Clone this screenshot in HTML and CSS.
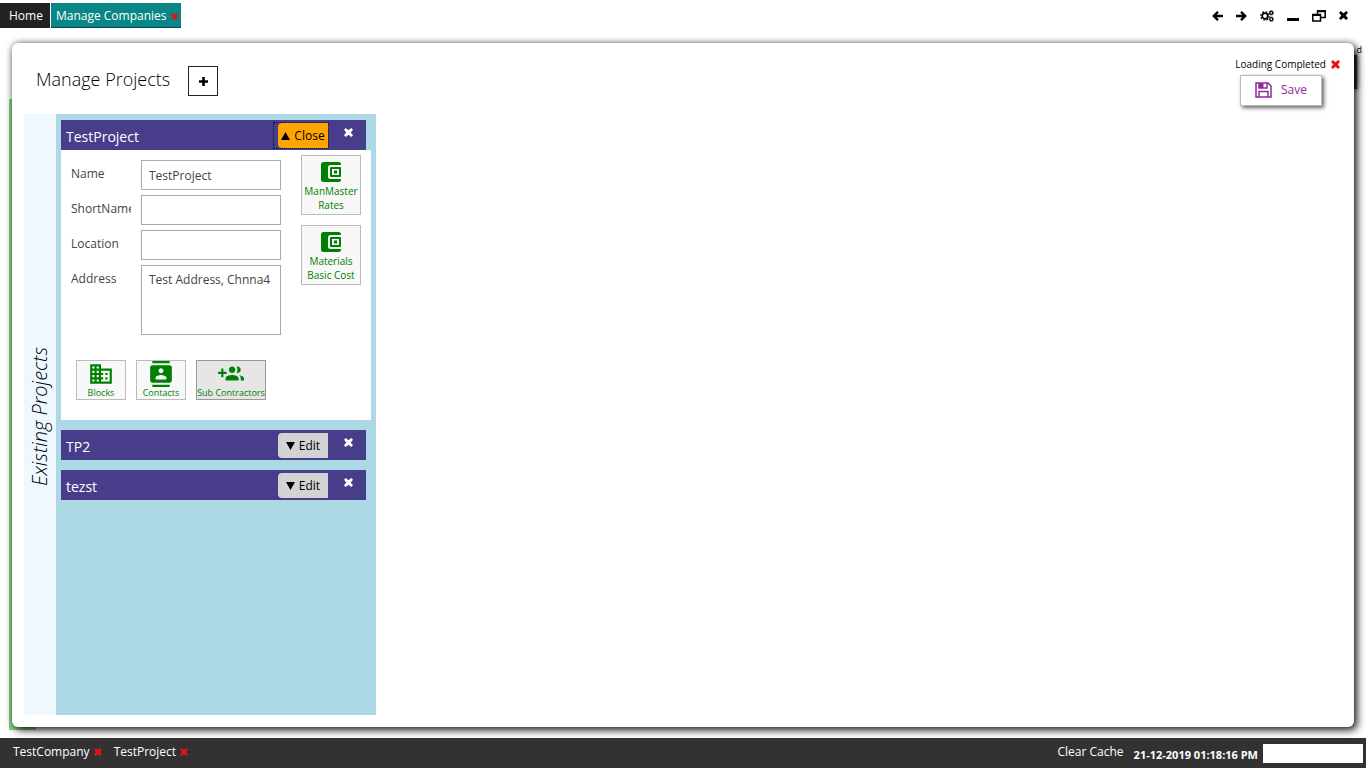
FILE: index.html
```html
<!DOCTYPE html>
<html lang="en">
<head>
<meta charset="utf-8">
<title>Manage Companies</title>
<link rel="stylesheet" href="styles.css">
</head>
<body>
<svg class="defs" aria-hidden="true">
  <symbol id="x" viewBox="0 0 10 10"><path d="M2 0 5 2.500 8 0 10 2 7.500 5 10 8 8 10 5 7.500 2 10 0 8 2.500 5 0 2z"/></symbol>
  <symbol id="wallet" viewBox="0 0 20 20"><path fill-rule="evenodd" d="M2.500 0h15A2.500 2.500 0 0 1 20 2.500V3H9.500a2.500 2.500 0 0 0-2.500 2.500v9A2.500 2.500 0 0 0 9.500 17H20v.5a2.500 2.500 0 0 1-2.500 2.500h-15A2.500 2.500 0 0 1 0 17.500v-15A2.500 2.500 0 0 1 2.500 0zM10 5h9a1 1 0 0 1 1 1v8a1 1 0 0 1-1 1h-9a1 1 0 0 1-1-1V6a1 1 0 0 1 1-1zM11 7v6h7V7zM13 8.500h3v3h-3z"/></symbol>
</svg>
<header class="topbar">
  <nav class="tabs">
    <button class="tab">Home</button>
    <div class="tab tab-active"><a href="#">Manage Companies</a><button class="icon-btn red" aria-label="Close tab"><svg width="7" height="7"><use href="#x"/></svg></button></div>
  </nav>
  <div class="window-tools">
    <button class="icon-btn" aria-label="Back"><svg width="11" height="10" viewBox="0 0 11 10" class="line"><path d="M11 5H1.500M6 .8 1.800 5 6 9.200"/></svg></button>
    <button class="icon-btn" aria-label="Forward"><svg width="11" height="10" viewBox="0 0 11 10" class="line"><path d="M0 5h9.500M5 .8 9.200 5 5 9.200"/></svg></button>
    <button class="icon-btn" aria-label="Settings"><svg width="14" height="12" viewBox="0 0 14 12"><g fill="none" stroke="#000"><circle cx="5" cy="6" r="2.800" stroke-width="1.700"/><circle cx="5" cy="6" r="4.200" stroke-width="1.200" stroke-dasharray="1.700 1.600"/><circle cx="11.300" cy="2.800" r="1.500" stroke-width="1.300"/><circle cx="11.300" cy="9.200" r="1.500" stroke-width="1.300"/><circle cx="11.300" cy="2.800" r="2.300" stroke-width=".8" stroke-dasharray="1 .8"/><circle cx="11.300" cy="9.200" r="2.300" stroke-width=".8" stroke-dasharray="1 .8"/></g></svg></button>
    <button class="icon-btn" aria-label="Minimize"><svg width="12" height="12" viewBox="0 0 12 12"><path d="M0 8h12v3H0z"/></svg></button>
    <button class="icon-btn" aria-label="Restore"><svg width="14" height="12" viewBox="0 0 14 12"><path fill="none" stroke="#000" stroke-width="1.500" d="M5.500 4V1h7.700v6.500H9M.8 4.500h7.700V11H.8z"/><path d="M5 .3h9v2H5zM0 4h9v2H0z"/></svg></button>
    <button class="icon-btn" aria-label="Close"><svg width="9" height="9"><use href="#x"/></svg></button>
  </div>
</header>
<main class="stage">
  <div class="back-panel"></div>
  <div class="back-shade"></div>
  <section class="dialog">
    <div class="dialog-head">
      <h1>Manage Projects</h1>
      <button class="add" aria-label="Add project"><svg width="9" height="9" viewBox="0 0 9 9"><path d="M3.200 0h2.600v3.200H9v2.600H5.800V9H3.200V5.800H0V3.200h3.200z"/></svg></button>
      <div class="actions">
        <div class="status"><span>Loading Completed</span><button class="icon-btn red" aria-label="Dismiss"><svg width="9" height="9"><use href="#x"/></svg></button></div>
        <button class="save"><svg width="17" height="16" viewBox="0 0 17 16"><path fill="none" stroke="#8e2a9b" stroke-width="1.500" d="M1 1h12l3 3v11H1zM4 1v5h8V1M4 15V9.500h9V15"/><path fill="#8e2a9b" d="M4 1h4.500v5H4z"/></svg>Save</button>
      </div>
    </div>
    <div class="projects">
      <h2 class="side-title">Existing Projects</h2>
      <div class="project-list">
        <article>
          <div class="bar"><h3>TestProject</h3><div class="focus"><button class="toggle toggle-open"><svg width="9" height="8" viewBox="0 0 9 8"><path d="M4.500 0 9 8H0z"/></svg>Close</button></div><button class="icon-btn white" aria-label="Remove TestProject"><svg width="9" height="9"><use href="#x"/></svg></button></div>
          <div class="details">
            <div class="detail-main">
              <form class="fields">
                <label for="name">Name</label><input id="name" value="TestProject">
                <label for="short">ShortName</label><input id="short">
                <label for="location">Location</label><input id="location">
                <label for="address">Address</label><textarea id="address">Test Address, Chnna4</textarea>
              </form>
              <div class="rates">
                <button class="tile tile-big"><svg width="20" height="20"><use href="#wallet"/></svg>ManMaster<br>Rates</button>
                <button class="tile tile-big"><svg width="20" height="20"><use href="#wallet"/></svg>Materials<br>Basic Cost</button>
              </div>
            </div>
            <div class="links">
              <button class="tile"><svg width="26" height="26" viewBox="0 0 24 24"><path d="M12 7V3H2v18h20V7H12zM6 19H4v-2h2v2zm0-4H4v-2h2v2zm0-4H4V9h2v2zm0-4H4V5h2v2zm4 12H8v-2h2v2zm0-4H8v-2h2v2zm0-4H8V9h2v2zm0-4H8V5h2v2zm10 12h-8v-2h2v-2h-2v-2h2v-2h-2V9h8v10zm-2-8h-2v2h2v-2zm0 4h-2v2h2v-2z"/></svg>Blocks</button>
              <button class="tile"><svg width="26" height="26" viewBox="0 0 24 24"><path d="M20 0H4v2h16V0zM4 24h16v-2H4v2zM20 4H4c-1.100 0-2 .9-2 2v12c0 1.100.9 2 2 2h16c1.100 0 2-.9 2-2V6c0-1.100-.9-2-2-2zm-8 2.750c1.240 0 2.250 1.010 2.250 2.250s-1.010 2.250-2.250 2.250S9.750 10.240 9.750 9 10.760 6.750 12 6.750zM17 17H7v-1.500c0-1.670 3.330-2.500 5-2.500s5 .83 5 2.500V17z"/></svg>Contacts</button>
              <button class="tile tile-wide"><svg width="26" height="26" viewBox="0 0 24 24"><path d="M8 10H5V7H3v3H0v2h3v3h2v-3h3v-2zm10 1c1.660 0 2.990-1.340 2.990-3S19.660 5 18 5c-.32 0-.63.050-.91.140.57.810.9 1.790.9 2.860s-.34 2.040-.9 2.860c.28.090.59.140.91.140zm-5 0c1.660 0 2.990-1.340 2.990-3S14.660 5 13 5c-1.660 0-3 1.340-3 3s1.340 3 3 3zm6.620 2.160c.83.730 1.380 1.660 1.380 2.840v2h3v-2c0-1.540-2.370-2.490-4.380-2.840zM13 13c-2 0-6 1-6 3v2h12v-2c0-2-4-3-6-3z"/></svg>Sub Contractors</button>
            </div>
          </div>
        </article>
        <article class="bar"><h3>TP2</h3><button class="toggle"><svg width="9" height="8" viewBox="0 0 9 8"><path d="M0 0h9L4.500 8z"/></svg>Edit</button><button class="icon-btn white" aria-label="Remove TP2"><svg width="9" height="9"><use href="#x"/></svg></button></article>
        <article class="bar"><h3>tezst</h3><button class="toggle"><svg width="9" height="8" viewBox="0 0 9 8"><path d="M0 0h9L4.500 8z"/></svg>Edit</button><button class="icon-btn white" aria-label="Remove tezst"><svg width="9" height="9"><use href="#x"/></svg></button></article>
      </div>
    </div>
  </section>
  <span class="back-text">d</span>
</main>
<footer class="footer">
  <div class="crumb"><a href="#">TestCompany</a><button class="icon-btn red" aria-label="Close TestCompany"><svg width="8" height="8"><use href="#x"/></svg></button></div>
  <div class="crumb"><a href="#">TestProject</a><button class="icon-btn red" aria-label="Close TestProject"><svg width="8" height="8"><use href="#x"/></svg></button></div>
  <button class="clear">Clear Cache</button>
  <time>21-12-2019 01:18:16 PM</time>
  <div class="blank"></div>
</footer>
</body>
</html>
```
FILE: styles.css
```css
* { box-sizing: border-box; }
body {
  margin: 0;
  min-height: 100vh;
  display: flex;
  flex-direction: column;
  background: #fff;
  color: #000;
  font: 12px/16px "Open Sans", "Noto Sans", sans-serif;
}
button, input, textarea { font: inherit; color: inherit; }
button { padding: 0; border: 0; background: none; cursor: pointer; }
a { color: inherit; text-decoration: none; }
h1, h2, h3 { margin: 0; font-weight: 400; }
svg { display: block; fill: currentColor; }
.defs { width: 0; height: 0; position: absolute; }
.icon-btn { display: flex; align-items: center; justify-content: center; }
.line { fill: none; stroke: #000; stroke-width: 2.4; }
.red { color: #e81010; }
.white { color: #fff; }

.topbar { display: flex; justify-content: space-between; align-items: flex-start; padding-top: 3px; height: 43px; }
.tabs { display: flex; gap: 1px; }
.tab { display: flex; align-items: center; gap: 4px; height: 25px; padding: 1px 7px 0 9px; background: #222; color: #fff; }
.tab-active { background: #098686; box-shadow: inset 0 -1px #004455; padding: 1px 3px 0 5px; }
.window-tools { display: flex; align-items: center; gap: 13px; height: 25px; padding-right: 18px; }

.stage { flex: 1; display: flex; position: relative; padding: 0 12px 11px; }
.back-panel { position: absolute; left: 9px; top: 56px; bottom: 8px; width: 27px; background: #86d98a; }
.back-shade { position: absolute; right: 9px; top: 12px; width: 6px; height: 34px; background: #333; box-shadow: 0 0 5px #333; }
.back-text { position: absolute; right: 4px; top: 0; font-size: 9px; line-height: 14px; }
.dialog {
  position: relative;
  flex: 1;
  display: flex;
  flex-direction: column;
  padding: 12px;
  border-radius: 6px;
  background: #fff;
  box-shadow: 3px 3px 8px rgba(0, 0, 0, .85), 0 0 6px rgba(0, 0, 0, .35);
}
.dialog-head { display: flex; align-items: flex-start; height: 59px; padding-left: 12px; }
.dialog-head h1 { padding-top: 12px; font-size: 18px; line-height: 24px; font-weight: 300; }
.add { display: flex; align-items: center; justify-content: center; width: 30px; height: 30px; margin: 11px 0 0 18px; border: 1px solid #222; }
.actions { display: flex; flex-direction: column; align-items: flex-end; margin-left: auto; padding-right: 2px; }
.status { display: flex; align-items: center; gap: 5px; height: 18px; margin-bottom: 2px; font-size: 10px; }
.save { display: flex; align-items: center; justify-content: center; gap: 9px; width: 82px; height: 31px; margin-right: 18px; padding-bottom: 1px; border: 1px solid #bbb; background: #fff; color: #8e2a9b; box-shadow: 2px 2px 4px rgba(0, 0, 0, .6); }

.projects { flex: 1; display: flex; }
.side-title { width: 32px; padding-bottom: 4px; background: #f0f8ff; writing-mode: vertical-rl; transform: rotate(180deg); text-align: center; font-size: 20px; line-height: 32px; font-style: italic; font-weight: 300; }
.project-list { display: flex; flex-direction: column; gap: 10px; width: 320px; padding: 6px 5px; background: #add8e6; }
.bar { display: flex; align-items: center; height: 30px; margin-right: 5px; padding: 0 13px 0 5px; background: #483d8b; color: #fff; }
.bar h3 { flex: 1; padding-top: 3px; font-size: 14px; line-height: 20px; }
.bar .icon-btn { align-self: flex-start; margin: 8px 0 0 16px; }
.focus { margin-right: -1px; border: 1px dotted #112; padding-left: 4px; }
.toggle { display: flex; align-items: center; justify-content: center; gap: 4px; width: 50px; height: 25px; padding-top: 1px; border-radius: 4px 0 0 4px; background: #d3d3d3; color: #000; }
.toggle-open { background: #ffa500; }
.details { height: 270px; padding: 5px 10px 20px; background: #fff; display: flex; flex-direction: column; justify-content: space-between; }
.detail-main { display: flex; justify-content: space-between; }
.fields { display: grid; grid-template-columns: 60px 140px; column-gap: 10px; row-gap: 5px; padding-top: 5px; color: #444; }
.fields label { padding-top: 6px; overflow: hidden; }
.fields input, .fields textarea { width: 100%; height: 30px; margin: 0; padding: 6px 7px; border: 1px solid #aaa; border-radius: 0; background: #fff; resize: none; outline: 0; }
.fields textarea { height: 70px; }
.rates { display: flex; flex-direction: column; gap: 10px; }
.tile { display: flex; flex-direction: column; align-items: center; width: 50px; height: 40px; border: 1px solid #bbb; background: #f8f8f8; color: #008000; font-size: 9px; line-height: 12px; white-space: nowrap; }
.tile-big { width: 60px; height: 60px; padding-top: 6px; font-size: 10px; line-height: 14px; }
.tile-big svg { margin-bottom: 2px; }
.tile-wide { width: 70px; border-color: #999; background: #e6e6e6; }
.links { display: flex; gap: 10px; padding-left: 5px; }

.footer { display: flex; align-items: center; height: 30px; padding: 0 3px 2px 13px; background: #323232; color: #fff; }
.crumb { display: flex; align-items: center; gap: 4px; margin-right: 12px; }
.clear { margin-left: auto; }
time { margin: 5px 5px 0 10px; font-size: 11px; font-weight: 700; }
.blank { width: 100px; height: 19px; margin-top: 2px; background: #fff; }
```
